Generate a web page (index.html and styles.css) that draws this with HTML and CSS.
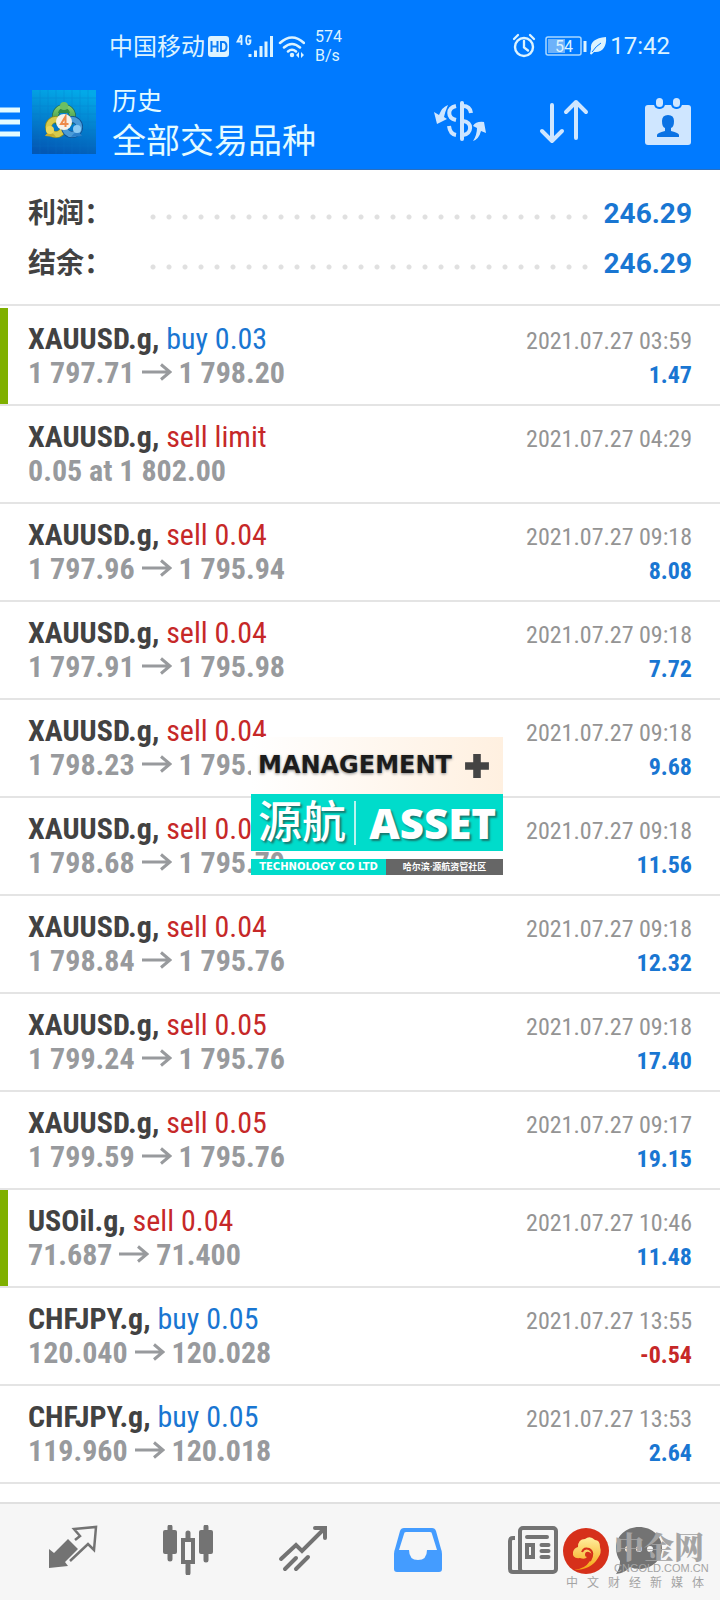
FILE: index.html
```html
<!DOCTYPE html>
<html lang="zh-CN">
<head>
<meta charset="utf-8">
<meta name="viewport" content="width=device-width, initial-scale=1">
<title>历史</title>
<link rel="stylesheet" href="styles.css">
</head>
<body>
<svg class="defs" aria-hidden="true">
  <symbol id="arrow" viewBox="0 0 30 18"><path d="M0 9H28M19 1.500 28 9 19 16.500" fill="none" stroke="currentColor" stroke-width="3"/></symbol>
</svg>
<div class="app">
  <header class="header">
    <div class="status">
      <span class="carrier">中国移动</span>
      <svg class="status-icons" width="100" height="28" viewBox="0 0 100 28" aria-hidden="true">
        <rect x="3" y="4" width="21" height="21" rx="3" fill="#dcf3ff"/>
        <path d="M6.500 9v11M12.500 9v11M6.500 14.500h6M16 10v9h2q3.500 0 3.500-4.500T18 10z" fill="none" stroke="#0a7cf5" stroke-width="2"/>
        <path d="M36 3l-3.500 6.500h5M36.500 3v10M45.500 5.500Q45 4 43.200 4q-2 0-2 4.200t2 4.200q2.300 0 2.300-3.900h-2" fill="none" stroke="#dcf3ff" stroke-width="1.800"/>
        <path d="M45 22v3M50.500 18.500v6.500M56 14v11M61 9.500v15.500M66.500 4v21" stroke="#dcf3ff" stroke-width="3"/>
        <path d="M75 11q12-11 24 0M79 15.500q8-7 16 0M83 19.500q4-3.500 8 0" fill="none" stroke="#dcf3ff" stroke-width="2.500" stroke-linecap="round"/>
        <circle cx="87" cy="23" r="2.200" fill="#dcf3ff"/>
        <path d="M94 20v6l-3-3zM96 20v6l3-3z" fill="#dcf3ff"/>
      </svg>
      <span class="speed">574<br>B/s</span>
      <span class="status-right">
        <svg width="96" height="26" viewBox="0 0 96 26" aria-hidden="true">
          <circle cx="12" cy="14" r="9" fill="none" stroke="#dcf3ff" stroke-width="2.400"/>
          <path d="M12 8v6.500l4 3M2 6l4-4M18 2l4 4" fill="none" stroke="#dcf3ff" stroke-width="2.300" stroke-linecap="round"/>
          <rect x="34" y="4" width="35" height="18" rx="2" fill="none" stroke="#a9d8ff" stroke-width="1.500"/>
          <rect x="36" y="6" width="17" height="14" fill="#6db2fa"/>
          <path d="M73 8v11" stroke="#dcf3ff" stroke-width="3"/>
          <text class="battery" x="52" y="19" text-anchor="middle">54</text>
          <path d="M94 4C83 5 78 9 79 16l-1 5 1.500.500L82 19c8 1 13-5 12-15z" fill="#dcf3ff"/>
          <path d="M80 19Q84 13 89 10" fill="none" stroke="#007aff" stroke-width="1"/>
        </svg>
        <time class="clock">17:42</time>
      </span>
    </div>
    <div class="toolbar">
      <button class="icon-button menu" aria-label="菜单">
        <svg width="20" height="30" viewBox="0 0 20 30"><path d="M0 3h20M0 15h20M0 27h20" stroke="#e4fbff" stroke-width="5"/></svg>
      </button>
      <svg class="logo" viewBox="0 0 64 64" aria-hidden="true">
        <defs>
          <linearGradient id="lg" x1="0.600" y1="0" x2="0.400" y2="1"><stop offset="0" stop-color="#03a9e8"/><stop offset="1" stop-color="#0358b4"/></linearGradient>
          <linearGradient id="gr" x1="0" y1="0" x2="0" y2="1"><stop offset="0" stop-color="#7fca6a"/><stop offset="1" stop-color="#2c8c45"/></linearGradient>
        </defs>
        <rect width="64" height="64" fill="url(#lg)"/>
        <path d="M8 0v64M16 0v64M24 0v64M32 0v64M40 0v64M48 0v64M56 0v64M0 8h64M0 16h64M0 24h64M0 32h64M0 40h64M0 48h64M0 56h64" stroke="#0874c8" stroke-width=".5" opacity=".5"/>
        <circle cx="32" cy="26" r="8.500" fill="none" stroke="#1f6b55" stroke-width="7"/>
        <circle cx="32" cy="26" r="8.500" fill="none" stroke="url(#gr)" stroke-width="5.500"/>
        <circle cx="24" cy="37" r="7.500" fill="none" stroke="#8a8d25" stroke-width="7"/>
        <circle cx="24" cy="37" r="7.500" fill="none" stroke="#d8ca4c" stroke-width="5.500"/>
        <circle cx="40" cy="37" r="7.500" fill="none" stroke="#0e4d8f" stroke-width="7"/>
        <circle cx="40" cy="37" r="7.500" fill="none" stroke="#4a9bd8" stroke-width="5.500"/>
        <path d="M26 23q1-5 6-5t6 5z" fill="#2f8a45"/><circle cx="32" cy="16" r="4" fill="#6cbf62"/>
        <path d="M13 46q5-8 11 1z" fill="#c7aa2b"/><circle cx="18" cy="40" r="4" fill="#edd75a"/>
        <path d="M39 47q6-9 11-1z" fill="#2b80cb"/><circle cx="45" cy="39" r="4" fill="#8bcaf3"/>
        <circle cx="32" cy="32" r="8" fill="#f6f1e8"/>
        <path d="M33.500 37V26.500L29 34h7.500" fill="none" stroke="#ee8a4a" stroke-width="2"/>
      </svg>
      <div class="titles">
        <div class="subtitle">历史</div>
        <h1 class="title">全部交易品种</h1>
      </div>
      <div class="actions">
        <button class="icon-button" aria-label="货币">
          <svg width="54" height="50" viewBox="0 0 54 50" fill="none" stroke="#cfe6ff" stroke-width="4">
            <path d="M29 6v36" stroke-linecap="round"/>
            <path d="M30 9q7 0 8 7M23 9c-9 2-9 12 0 14M30 24c10 1 9 13 0 14M23 38q-6-1-7-9"/>
            <path d="M15 8Q9 10 6 18L1 15l3 12 10-5-3-2q1-5 4-12zM40 44q6-2 8-10l5 2-2-11q-8-1-11 4l4 2q0 7-4 13z" fill="#cfe6ff" stroke="none"/>
          </svg>
        </button>
        <button class="icon-button" aria-label="排序">
          <svg width="54" height="50" viewBox="0 0 54 50" fill="none" stroke="#cfe6ff" stroke-width="4" stroke-linecap="round" stroke-linejoin="round"><path d="M13 8v36M3 34l10 10 10-10M37 41V5M27 15 37 5l10 10"/></svg>
        </button>
        <button class="icon-button" aria-label="日期">
          <svg width="46" height="50" viewBox="0 0 46 50">
            <rect y="8" width="46" height="40" rx="3" fill="#cfe6ff"/>
            <rect x="9" y="0" width="11" height="12" rx="5" fill="#007aff"/><rect x="26" y="0" width="11" height="12" rx="5" fill="#007aff"/>
            <rect x="11" y="1" width="7" height="9" rx="3.500" fill="#cfe6ff"/><rect x="28" y="1" width="7" height="9" rx="3.500" fill="#cfe6ff"/>
            <path d="M23 18q6 0 6 6t-3 7v3q8 2 8 4v2H12v-2q0-2 8-4v-3q-3-1-3-7t6-6z" fill="#0a72e4"/>
          </svg>
        </button>
      </div>
    </div>
  </header>

  <section class="summary">
    <div class="sum-row"><span class="sum-label">利润：</span><span class="dots"></span><span class="sum-value">246.29</span></div>
    <div class="sum-row"><span class="sum-label">结余：</span><span class="dots"></span><span class="sum-value">246.29</span></div>
  </section>

  <main class="deals">
    <ul class="list">
      <li class="deal marked"><div class="line"><span class="name">XAUUSD.g, <span class="buy">buy 0.03</span></span><time class="date">2021.07.27 03:59</time></div><div class="line"><span class="price">1 797.71 <svg class="arrow"><use href="#arrow"/></svg> 1 798.20</span><span class="profit">1.47</span></div></li>
      <li class="deal"><div class="line"><span class="name">XAUUSD.g, <span class="sell">sell limit</span></span><time class="date">2021.07.27 04:29</time></div><div class="line"><span class="price">0.05 at 1 802.00</span></div></li>
      <li class="deal"><div class="line"><span class="name">XAUUSD.g, <span class="sell">sell 0.04</span></span><time class="date">2021.07.27 09:18</time></div><div class="line"><span class="price">1 797.96 <svg class="arrow"><use href="#arrow"/></svg> 1 795.94</span><span class="profit">8.08</span></div></li>
      <li class="deal"><div class="line"><span class="name">XAUUSD.g, <span class="sell">sell 0.04</span></span><time class="date">2021.07.27 09:18</time></div><div class="line"><span class="price">1 797.91 <svg class="arrow"><use href="#arrow"/></svg> 1 795.98</span><span class="profit">7.72</span></div></li>
      <li class="deal"><div class="line"><span class="name">XAUUSD.g, <span class="sell">sell 0.04</span></span><time class="date">2021.07.27 09:18</time></div><div class="line"><span class="price">1 798.23 <svg class="arrow"><use href="#arrow"/></svg> 1 795.</span><span class="profit">9.68</span></div></li>
      <li class="deal"><div class="line"><span class="name">XAUUSD.g, <span class="sell">sell 0.0</span></span><time class="date">2021.07.27 09:18</time></div><div class="line"><span class="price">1 798.68 <svg class="arrow"><use href="#arrow"/></svg> 1 795.79</span><span class="profit">11.56</span></div></li>
      <li class="deal"><div class="line"><span class="name">XAUUSD.g, <span class="sell">sell 0.04</span></span><time class="date">2021.07.27 09:18</time></div><div class="line"><span class="price">1 798.84 <svg class="arrow"><use href="#arrow"/></svg> 1 795.76</span><span class="profit">12.32</span></div></li>
      <li class="deal"><div class="line"><span class="name">XAUUSD.g, <span class="sell">sell 0.05</span></span><time class="date">2021.07.27 09:18</time></div><div class="line"><span class="price">1 799.24 <svg class="arrow"><use href="#arrow"/></svg> 1 795.76</span><span class="profit">17.40</span></div></li>
      <li class="deal"><div class="line"><span class="name">XAUUSD.g, <span class="sell">sell 0.05</span></span><time class="date">2021.07.27 09:17</time></div><div class="line"><span class="price">1 799.59 <svg class="arrow"><use href="#arrow"/></svg> 1 795.76</span><span class="profit">19.15</span></div></li>
      <li class="deal marked"><div class="line"><span class="name">USOil.g, <span class="sell">sell 0.04</span></span><time class="date">2021.07.27 10:46</time></div><div class="line"><span class="price">71.687 <svg class="arrow"><use href="#arrow"/></svg> 71.400</span><span class="profit">11.48</span></div></li>
      <li class="deal"><div class="line"><span class="name">CHFJPY.g, <span class="buy">buy 0.05</span></span><time class="date">2021.07.27 13:55</time></div><div class="line"><span class="price">120.040 <svg class="arrow"><use href="#arrow"/></svg> 120.028</span><span class="profit loss">-0.54</span></div></li>
      <li class="deal"><div class="line"><span class="name">CHFJPY.g, <span class="buy">buy 0.05</span></span><time class="date">2021.07.27 13:53</time></div><div class="line"><span class="price">119.960 <svg class="arrow"><use href="#arrow"/></svg> 120.018</span><span class="profit">2.64</span></div></li>
    </ul>
  </main>

  <nav class="tabs">
    <button class="tab" aria-label="行情"><svg width="50" height="50" viewBox="0 0 50 50"><path d="M1 24l5 4 14-14 10 10-13 13 3 4L1 43z" fill="#737373"/><path d="M27 15l5-4-6-7 22-2-2 23-6-6-18 17" fill="none" stroke="#737373" stroke-width="2.500"/></svg></button>
    <button class="tab" aria-label="图表"><svg width="50" height="50" viewBox="0 0 50 50"><path d="M7 2v32M43 2v33M25 8v6M25 40v8" stroke="#737373" stroke-width="5" stroke-linecap="round"/><rect y="5" width="14" height="24" rx="2" fill="#737373"/><rect x="36" y="5" width="14" height="24" rx="2" fill="#737373"/><rect x="20" y="15" width="10" height="22" fill="#f6f6f6" stroke="#737373" stroke-width="4"/></svg></button>
    <button class="tab" aria-label="交易"><svg width="50" height="50" viewBox="0 0 50 50" fill="none" stroke="#737373" stroke-width="4" stroke-linecap="round"><path d="M3 34l15-14 6 6L46 4M37 3h10v10M7 44l11-11M18 44l12-12"/></svg></button>
    <button class="tab" aria-label="历史"><svg width="50" height="50" viewBox="0 0 50 50"><path d="M11 3h28q3 0 4 3l5 18q1 2 1 5v15q0 3-3 3H4q-3 0-3-3V29q0-3 1-5L7 6q1-3 4-3zM13 7q-2 0-2 2L6 25h10q0 10 9 10t9-10h10L39 9q0-2-2-2z" fill="#449cff" fill-rule="evenodd"/></svg></button>
    <button class="tab" aria-label="新闻"><svg width="50" height="50" viewBox="0 0 50 50" fill="none" stroke="#737373" stroke-width="4"><rect x="12" y="3" width="36" height="44" rx="3"/><path d="M7 13H5q-3 0-3 3v28q0 3 3 3h10"/><path d="M19 12h20M33.500 20h7M33.500 26h7M33.500 32h7" stroke-linecap="round"/><rect x="19" y="20" width="6" height="12"/></svg></button>
    <button class="tab" aria-label="消息"><svg width="70" height="50" viewBox="0 0 70 50"><path d="M26 2c13 0 23 9 23 21S39 44 26 44q-5 0-9-2-5 6-14 7 4-5 4-13-4-6-4-13C3 11 13 2 26 2z" fill="#737373"/><circle cx="15" cy="24" r="3" fill="#f6f6f6"/><circle cx="26" cy="24" r="3" fill="#f6f6f6"/><circle cx="37" cy="24" r="3" fill="#f6f6f6"/></svg></button>
  </nav>

  <aside class="stamp">
    <div class="stamp-top"><span>MANAGEMENT</span><svg width="26" height="26" viewBox="0 0 24 24"><path d="M8.500 1h7v7.500H23v7h-7.500V23h-7v-7.500H1v-7h7.500z" fill="#444"/></svg></div>
    <div class="stamp-mid"><span class="stamp-cn">源航</span><span class="stamp-en">ASSET</span></div>
    <div class="stamp-bottom"><span class="stamp-co">TECHNOLOGY CO LTD</span><span class="stamp-place">哈尔滨·源航资管社区</span></div>
  </aside>

  <aside class="site">
    <div class="site-top">
      <svg width="46" height="46" viewBox="0 0 46 46" aria-hidden="true">
        <defs><linearGradient id="gold" x1="0" y1="0" x2="0" y2="1"><stop offset="0" stop-color="#fff0a0"/><stop offset="1" stop-color="#f5a30e"/></linearGradient></defs>
        <circle cx="23" cy="23" r="23" fill="#d6301a"/>
        <path d="M11 42q11-1 16-9 4-7-1-9-4-1-4 3 0 2 2 2-2 3-7 1-8 1-7-6 1-4 5-5 0-8 7-8 5-4 10 1 5 0 5 7 2 6-2 11-7 12-24 12z" fill="url(#gold)"/>
        <path d="M19 24q2-5 7-3 6 3 1 12" fill="none" stroke="#d6301a" stroke-width="2"/>
      </svg>
      <div class="site-names"><div class="site-cn">中金网</div><div class="site-url">CNGOLD.COM.CN</div></div>
    </div>
    <div class="site-tag"><span>中</span><span>文</span><span>财</span><span>经</span><span>新</span><span>媒</span><span>体</span></div>
  </aside>
</div>
</body>
</html>
```
FILE: styles.css
```css
* { box-sizing: border-box; }
body {
  margin: 0;
  background: #fff;
  color: #424242;
  font-family: Roboto, "Noto Sans CJK SC", sans-serif;
}
button { padding: 0; border: 0; background: none; }
svg { display: block; flex: none; }
.defs { position: absolute; width: 0; height: 0; }
.app {
  position: relative;
  display: flex;
  flex-direction: column;
  height: 100vh;
  overflow: hidden;
}

.header {
  flex: none;
  background: #007aff;
  border-bottom: 1px solid #2a6fc0;
  color: #e4fbff;
}
.status {
  display: flex;
  align-items: center;
  height: 60px;
  margin-top: 16px;
  padding: 0 50px 0 109px;
  color: #dcf3ff;
}
.carrier { font-size: 24px; line-height: 28px; padding-top: 2px; }
.speed { margin-left: 10px; font-size: 16px; line-height: 19px; }
.status-right { display: flex; align-items: center; gap: 2px; margin-left: auto; }
.battery { font-size: 16px; fill: #dcf3ff; }
.clock { font-size: 24px; line-height: 30px; }
.toolbar { display: flex; align-items: center; height: 93px; padding: 0 29px 2px 0; }
.logo { width: 64px; height: 64px; margin-left: 12px; }
.titles { margin-left: 16px; padding-top: 4px; }
.subtitle { font-size: 25px; line-height: 34px; }
.title { margin: 0; font-size: 34px; line-height: 44px; font-weight: 400; }
.actions { display: flex; align-items: center; gap: 52px; margin-left: auto; }

.summary {
  flex: none;
  padding: 19px 28px 15px;
  border-bottom: 2px solid #e4e4e4;
}
.sum-row { display: flex; align-items: center; height: 50px; font-weight: 700; }
.sum-label { width: 117px; font-size: 28px; line-height: 50px; }
.dots {
  flex: 1;
  height: 6px;
  margin: 6px 12px 0 0;
  background: radial-gradient(circle, #e0e0e0 2px, transparent 3px) left center / 16px 6px repeat-x;
}
.sum-value { color: #1976d2; font-size: 28px; line-height: 48px; }

.deals { flex: 1; min-height: 0; overflow: hidden; padding-top: 2px; }
.list { margin: 0; padding: 0; list-style: none; font-family: "Roboto Condensed", "Liberation Sans Narrow", Roboto, sans-serif; }
.deal { padding: 14px 28px; border-bottom: 2px solid #e4e4e4; }
.marked { box-shadow: inset 8px 0 #7fb000; }
.line { display: flex; align-items: baseline; justify-content: space-between; height: 34px; line-height: 34px; white-space: nowrap; }
.name { font-size: 30px; font-weight: 700; }
.buy, .sell { font-weight: 400; }
.buy { color: #1976d2; }
.sell { color: #c62828; }
.price { color: #989a9d; font-size: 30px; font-weight: 700; }
.arrow { display: inline-block; width: 30px; height: 18px; vertical-align: 2px; }
.date { color: #949494; font-size: 24px; }
.profit { color: #1976d2; font-size: 24px; font-weight: 700; }
.loss { color: #c62828; }

.tabs {
  display: flex;
  flex: none;
  height: 98px;
  padding: 0 15px;
  background: #f6f6f6;
  border-top: 2px solid #e0e0e0;
}
.tab { display: flex; flex: 1; align-items: center; justify-content: center; padding-bottom: 4px; }

.stamp { position: absolute; top: 737px; left: 251px; width: 252px; color: #fff; white-space: nowrap; }
.stamp-top {
  display: flex;
  align-items: center;
  gap: 12px;
  height: 57px;
  padding-left: 7px;
  background: linear-gradient(90deg, #fff, #fff0e0);
  color: #1c1c1c;
  font: 700 24px/57px "DejaVu Sans", sans-serif;
  text-shadow: 0 1px 3px #888;
}
.stamp-mid { display: flex; align-items: center; justify-content: space-between; height: 57px; padding: 0 7px; background: #00dccb; }
.stamp-cn { border-right: 2px solid #b9f5ef; padding-right: 8px; font-size: 44px; line-height: 44px; font-weight: 500; text-shadow: 2px 2px 2px #16796f; }
.stamp-en { font: 800 42px/44px "Open Sans", sans-serif; text-shadow: 2px 2px 2px #16796f; }
.stamp-bottom { display: flex; margin-top: 8px; line-height: 16px; font-weight: 700; text-align: center; }
.stamp-co { flex: 135; background: #00dccb; font-family: "DejaVu Sans", sans-serif; font-size: 10px; }
.stamp-place { flex: 117; background: #666; font-size: 9px; }

.site { position: absolute; right: 15px; bottom: 8px; width: 142px; color: #a4a4a4; }
.site-top { display: flex; align-items: center; gap: 5px; }
.site-cn { font: 900 30px/34px "Noto Serif CJK SC", "Noto Sans CJK SC", sans-serif; }
.site-url { font: 400 11px/12px "Liberation Sans", sans-serif; }
.site-tag { display: flex; justify-content: space-between; padding: 0 1px 0 3px; font-size: 12px; line-height: 18px; }
```
